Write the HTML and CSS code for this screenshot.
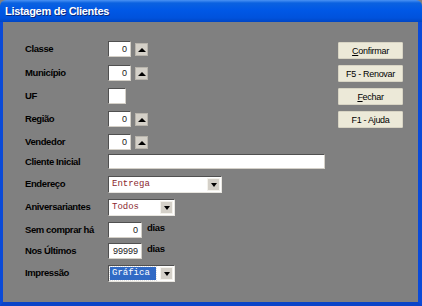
FILE: index.html
```html
<!DOCTYPE html>
<html lang="pt-BR">
<head>
    <meta charset="UTF-8">
    <title>Listagem de Clientes</title>
    <link rel="stylesheet" href="styles.css">
</head>
<body>
    <div class="window">
        <div class="titlebar">Listagem de Clientes</div>

        <div class="client">
            <div class="form">
                <div class="label">Classe</div>
                <div class="cell">
                    <div class="edit num">0</div>
                    <div class="spin"><span class="up"></span></div>
                </div>

                <div class="label">Município</div>
                <div class="cell">
                    <div class="edit num">0</div>
                    <div class="spin"><span class="up"></span></div>
                </div>

                <div class="label">UF</div>
                <div class="cell">
                    <div class="edit uf"></div>
                </div>

                <div class="label">Região</div>
                <div class="cell">
                    <div class="edit num">0</div>
                    <div class="spin"><span class="up"></span></div>
                </div>

                <div class="label">Vendedor</div>
                <div class="cell">
                    <div class="edit num">0</div>
                    <div class="spin"><span class="up"></span></div>
                </div>

                <div class="label">Cliente Inicial</div>
                <div class="cell">
                    <div class="edit wide"></div>
                </div>

                <div class="label">Endereço</div>
                <div class="cell">
                    <div class="combo long">
                        <span class="combo-text">Entrega</span>
                        <span class="drop"><span class="down"></span></span>
                    </div>
                </div>

                <div class="label">Aniversariantes</div>
                <div class="cell">
                    <div class="combo">
                        <span class="combo-text">Todos</span>
                        <span class="drop"><span class="down"></span></span>
                    </div>
                </div>

                <div class="label">Sem comprar há</div>
                <div class="cell">
                    <div class="edit days">0</div>
                    <span class="unit">dias</span>
                </div>

                <div class="label">Nos Últimos</div>
                <div class="cell">
                    <div class="edit days">99999</div>
                    <span class="unit">dias</span>
                </div>

                <div class="label">Impressão</div>
                <div class="cell">
                    <div class="combo">
                        <span class="combo-text selected">Gráfica</span>
                        <span class="drop"><span class="down"></span></span>
                    </div>
                </div>
            </div>

            <div class="buttons">
                <button><u>C</u>onfirmar</button>
                <button>F5 - Renovar</button>
                <button><u>F</u>echar</button>
                <button>F1 - Ajuda</button>
            </div>
        </div>
    </div>
</body>
</html>
```

FILE: styles.css
```css
body {
    margin: 0;
    background: #808080;
    font-family: "Liberation Sans", Arial, sans-serif;
}
.window {
    width: 422px;
    height: 306px;
    display: flex;
    flex-direction: column;
}
.titlebar {
    height: 22px;
    box-sizing: border-box;
    padding: 5px 0 0 5px;
    border-radius: 6px 6px 0 0;
    background: linear-gradient(#4a92f4 0, #0b62e0 3px, #0058e6 10px, #0052dc 18px, #0046c4 22px);
    color: white;
    font-weight: bold;
    font-size: 11px;
    letter-spacing: -0.3px;
    text-shadow: 1px 1px 0 #0a2a80;
}
.client {
    flex: 1;
    display: flex;
    background: #808080;
    border-left: 3px solid #0a4ad8;
    border-right: 4px solid #0a4ad8;
    border-bottom: 4px solid #0a44c8;
    padding: 19px 15px 0 22px;
}
.form {
    display: grid;
    grid-template-columns: 83px auto;
    grid-template-rows: 24px 23px 23px 23px 20px 22px 23px 23px 21px 22px auto;
}
.label {
    font-size: 9.5px;
    font-weight: bold;
    letter-spacing: -0.4px;
    padding-top: 2px;
    color: black;
}
.cell {
    display: flex;
    align-items: flex-start;
    gap: 4px;
}
.edit {
    box-sizing: border-box;
    height: 16px;
    background: white;
    border-top: 1px solid #505050;
    border-left: 1px solid #505050;
    border-right: 1px solid #d4d0c8;
    border-bottom: 1px solid #d4d0c8;
    font-size: 9px;
    line-height: 15px;
    text-align: right;
    padding-right: 3px;
    color: #202020;
}
.num {
    width: 23px;
}
.uf {
    width: 18px;
}
.wide {
    width: 217px;
    height: 15px;
}
.days {
    width: 34px;
}
.spin {
    width: 13px;
    height: 13px;
    margin-top: 2px;
    background: #d4d0c8;
    border: 1px solid #b8b4ac;
    box-sizing: border-box;
    display: flex;
    align-items: center;
    justify-content: center;
}
.up {
    width: 0;
    height: 0;
    border-left: 4px solid transparent;
    border-right: 4px solid transparent;
    border-bottom: 4px solid black;
}
.unit {
    font-size: 9.5px;
    font-weight: bold;
    margin-left: 1px;
    letter-spacing: -0.3px;
}
.combo {
    box-sizing: border-box;
    width: 67px;
    height: 17px;
    background: white;
    border-top: 1px solid #505050;
    border-left: 1px solid #505050;
    border-right: 1px solid #e8e6e0;
    border-bottom: 1px solid #e8e6e0;
    display: flex;
    align-items: center;
    padding: 1px;
}
.long {
    width: 114px;
}
.combo-text {
    flex: 1;
    font-family: "Liberation Mono", "Courier New", monospace;
    font-size: 9px;
    color: #8a2830;
    padding-left: 2px;
    line-height: 13px;
}
.combo-text.selected {
    flex: 0 0 44px;
    background: #316ac5;
    color: white;
    outline: 1px dotted #e0e0e0;
    margin-right: auto;
}
.drop {
    width: 13px;
    height: 13px;
    margin-left: auto;
    background: #d4d0c8;
    border: 1px solid #f4f2ec;
    box-sizing: border-box;
    display: flex;
    align-items: center;
    justify-content: center;
}
.down {
    width: 0;
    height: 0;
    border-left: 3px solid transparent;
    border-right: 3px solid transparent;
    border-top: 4px solid black;
}
.buttons {
    margin-left: auto;
    padding-top: 1px;
    display: flex;
    flex-direction: column;
    gap: 6px;
}
button {
    width: 65px;
    height: 17px;
    padding: 0;
    background: #ece9d8;
    border: 1px solid #d8d4c4;
    border-radius: 1px;
    font-family: "Liberation Sans", Arial, sans-serif;
    font-size: 9px;
    letter-spacing: -0.3px;
    color: black;
}
```
